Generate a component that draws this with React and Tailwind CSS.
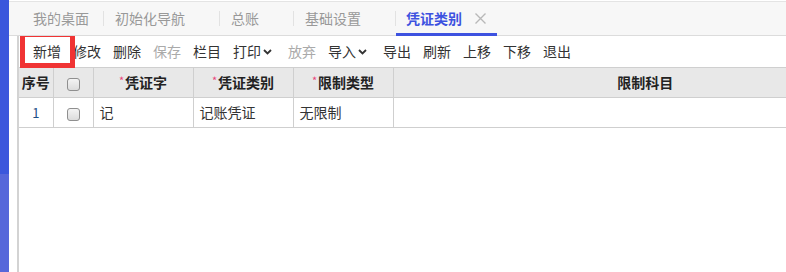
import React from "react";

const TABS = [
	{ label: "我的桌面", home: true },
	{ label: "初始化导航" },
	{ label: "总账" },
	{ label: "基础设置" },
	{ label: "凭证类别", active: true },
];

const TOOLS = [
	{ label: "新增" },
	{ label: "修改" },
	{ label: "删除" },
	{ label: "保存", disabled: true },
	{ label: "栏目" },
	{ label: "打印", menu: true },
	{ label: "放弃", disabled: true },
	{ label: "导入", menu: true },
	{ label: "导出" },
	{ label: "刷新" },
	{ label: "上移" },
	{ label: "下移" },
	{ label: "退出" },
];

function Chevron() {
	return (
		<svg width="9" height="6" viewBox="0 0 9 6" className="ml-[2px] mt-[1px]">
			<path d="M1 1 L4.5 4.5 L8 1" fill="none" stroke="#333" strokeWidth="1.8" />
		</svg>
	);
}

function CloseIcon() {
	return (
		<svg width="11" height="11" viewBox="0 0 11 11" className="ml-[13px]">
			<path d="M0.5 0.5 L10.5 10.5 M10.5 0.5 L0.5 10.5" stroke="#b8b8b8" strokeWidth="1.4" />
		</svg>
	);
}

function Checkbox() {
	return (
		<span className="inline-block h-[13px] w-[13px] rounded-[3px] border border-[#8f8f8f] bg-gradient-to-b from-[#f4f4f4] to-[#dcdcdc] align-middle" />
	);
}

function Star() {
	return <span className="relative -top-[3px] mr-[1px] text-[11px] font-normal text-[#e8457a]">*</span>;
}

export default function App() {
	return (
		<div
			className="flex h-[272px] w-[786px] overflow-hidden bg-white text-[14px] text-[#333]"
			style={{ fontFamily: '"Microsoft YaHei", "Noto Sans CJK SC", sans-serif' }}
		>
			<div className="flex w-[9px] shrink-0 flex-col">
				<div className="h-[174px] bg-[#3b57dc]" />
				<div className="flex-1 bg-[#5667da]" />
			</div>

			<div className="flex min-w-0 flex-1 flex-col">
				<div className="mt-[1px] flex h-[35px] items-stretch border-t border-b border-t-[#e4e4e4] border-b-[#dcdcdc] bg-[#f7f7f7]">
					<div className="flex items-stretch pl-[13px]">
						{TABS.map((tab, i) => (
							<div key={tab.label} className="flex items-stretch">
								{i > 0 && <div className="my-[9px] w-px bg-[#e2e2e2]" />}
								{tab.active ? (
									<div className="relative flex items-center pl-[10px] pr-[11px] font-bold text-[#3d52e0]">
										<span>{tab.label}</span>
										<CloseIcon />
										<div className="absolute bottom-[-1px] left-0 right-0 h-[3px] bg-[#3d52e0]" />
									</div>
								) : (
									<div
										className={`flex items-center pl-[11px] text-[#999] ${tab.home ? "pr-[14px]" : "pr-[34px]"}`}
									>
										{tab.label}
									</div>
								)}
							</div>
						))}
					</div>
				</div>

				<div className="ml-[8px] flex flex-1 flex-col overflow-hidden border-l-2 border-[#d3d3d3]">
					<div className="relative flex h-[31px] shrink-0 items-center pl-[14px]">
						{TOOLS.map((t) => (
							<div
								key={t.label}
								className={`flex items-center ${t.disabled ? "text-[#aaa]" : "text-[#333]"} ${t.menu ? "mr-[16px]" : "mr-[12px]"}`}
							>
								<span>{t.label}</span>
								{t.menu && <Chevron />}
							</div>
						))}
						{/* red highlight round 新增 */}
						<div className="absolute left-[1px] top-[-4px] h-[36px] w-[55px] border-[5px] border-[#f03434]" />
					</div>

					<table className="w-[878px] table-fixed border-collapse text-[14px]">
						<colgroup>
							<col className="w-[34px]" />
							<col className="w-[40px]" />
							<col className="w-[100px]" />
							<col className="w-[100px]" />
							<col className="w-[100px]" />
							<col />
						</colgroup>
						<thead>
							<tr className="h-[30px] bg-[#e8e8e8] font-bold text-[#222]">
								<th className="border border-l-0 border-[#cfcfcf] p-0 text-center">序号</th>
								<th className="border border-[#cfcfcf] p-0 text-center"><Checkbox /></th>
								<th className="border border-[#cfcfcf] p-0 text-center"><Star />凭证字</th>
								<th className="border border-[#cfcfcf] p-0 text-center"><Star />凭证类别</th>
								<th className="border border-[#cfcfcf] p-0 text-center"><Star />限制类型</th>
								<th className="border border-r-0 border-[#cfcfcf] p-0 text-center">限制科目</th>
							</tr>
						</thead>
						<tbody>
							<tr className="h-[30px]">
								<td className="border border-l-0 border-[#cfcfcf] p-0 text-center text-[13px] text-[#1d4f86]">1</td>
								<td className="border border-[#cfcfcf] p-0 text-center"><Checkbox /></td>
								<td className="border border-[#cfcfcf] px-[6px] py-0">记</td>
								<td className="border border-[#cfcfcf] px-[6px] py-0">记账凭证</td>
								<td className="border border-[#cfcfcf] px-[6px] py-0">无限制</td>
								<td className="border border-r-0 border-[#cfcfcf] p-0" />
							</tr>
						</tbody>
					</table>
				</div>
			</div>
		</div>
	);
}
